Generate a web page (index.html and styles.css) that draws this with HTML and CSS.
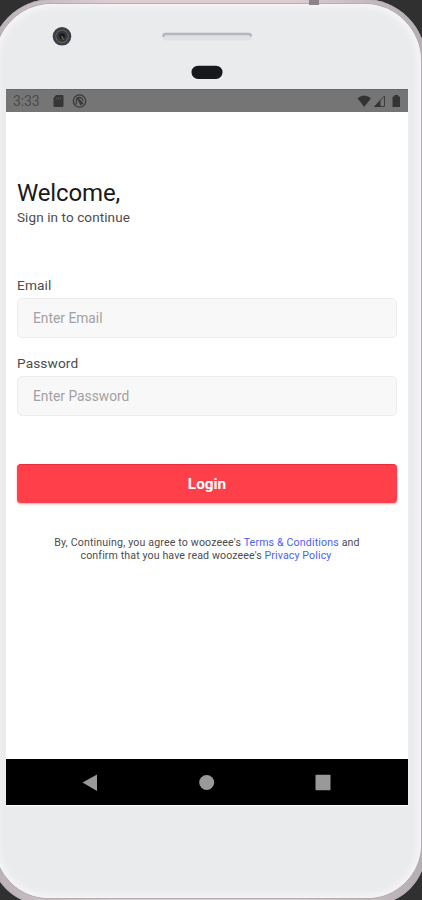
FILE: index.html
```html
<!DOCTYPE html>
<html lang="en">
<head>
<meta charset="utf-8">
<title>Login</title>
<link rel="stylesheet" href="styles.css">
</head>
<body>
<div class="device">
  <div class="shell">
    <header class="hardware">
      <svg width="402" height="85" viewBox="6 4 402 85">
        <circle cx="62" cy="36.3" r="9.3" fill="#3c3e42"/>
        <circle cx="62" cy="36.3" r="6.6" fill="#66686b"/>
        <circle cx="62" cy="36.3" r="5.7" fill="#34363a"/>
        <circle cx="62" cy="36" r="2.8" fill="#15191f"/>
        <path d="M61.6 36l2 3.5" stroke="#77763c" stroke-width="1.3"/>
        <rect x="163" y="32.5" width="88.500" height="8" rx="2.500" fill="#dfe1e7"/>
        <path d="M163.500 37v-1q0-2 2-2h83q2.500 0 2.500 2.500" fill="none" stroke="#b4b7bd" stroke-width="2.500"/>
        <rect x="191.500" y="65.700" width="31" height="13.300" rx="6.500" fill="#16181b"/>
      </svg>
    </header>
    <main class="screen">
      <div class="status">
        <span class="time">3:33</span>
        <svg class="status-left" width="36" height="16" viewBox="0 0 36 16">
          <path d="M5 2h6.500q1 0 1 1v10q0 1-1 1h-8q-1 0-1-1V5z" fill="#363636"/>
          <path d="M5.300 4.500v2M7.500 4v2.500M9.700 4v2.500" stroke="#606060" stroke-width=".7"/>
          <circle cx="28.500" cy="8" r="6.200" fill="none" stroke="#383838" stroke-width="1.300"/>
          <path d="M25.300 11.500v-4q0-3 3-3.200 3.400.1 3.500 3.700" fill="none" stroke="#383838" stroke-width="1.200"/>
          <path d="M26.500 5.500l5.300 5.300M28 8l2.500 4" stroke="#383838" stroke-width="1.800"/>
        </svg>
        <svg class="status-right" width="46" height="16" viewBox="0 0 46 16">
          <path d="M.5 5.200Q7.200-.2 14 5.200L7.200 14z" fill="#333"/>
          <path d="M17.500 13.500L27.500 3v10.500z" fill="none" stroke="#3d3d3d"/>
          <path d="M17 14l6.500-7v7z" fill="#333"/>
          <path d="M36 3.500h1.500V2h3.500v1.500h1.500q.5 0 .5.500v9.500q0 .5-.5.500H36q-.5 0-.5-.5V4q0-.5.500-.5z" fill="#333"/>
        </svg>
      </div>
      <form class="login">
        <h1>Welcome,</h1>
        <p class="subtitle">Sign in to continue</p>
        <label for="email">Email</label>
        <input id="email" type="text" placeholder="Enter Email">
        <label for="password">Password</label>
        <input id="password" type="password" placeholder="Enter Password">
        <button type="button">Login</button>
        <p class="legal">By, Continuing, you agree to woozeee's <a>Terms &amp; Conditions</a> and<br><span class="second">confirm that you have read woozeee's <a>Privacy Policy</a></span></p>
      </form>
      <nav class="navbar">
        <svg width="402" height="46" viewBox="0 0 402 46">
          <path d="M76.500 23.500L91 15.500v16.500z" fill="#999"/>
          <circle cx="200.700" cy="23.500" r="7.500" fill="#999"/>
          <rect x="309.500" y="15.700" width="15" height="15.500" rx=".8" fill="#999"/>
        </svg>
      </nav>
    </main>
  </div>
  <i class="antenna"></i>
</div>
</body>
</html>
```
FILE: styles.css
```css
* { box-sizing: border-box; }
html, body { height: 900px; overflow: hidden; }
body { margin: 0; background: #303030; font-family: Roboto, sans-serif; }
.device {
  position: relative;
  width: 436px;
  height: 906px;
  margin: -1px 0 0 -10px;
  padding: 5px 5px 7px;
  border-radius: 62px 62px 55px 55px;
  background: linear-gradient(90deg, #b9b1b6, #dccdd1 28%, #dccdd1 70%, #b3adb1);
  box-shadow: inset 0 0 0 1px #b7afb4;
}
.shell {
  height: 894px;
  padding-left: 11px;
  border-radius: 57px 57px 54px 54px;
  background: #eaebed;
  box-shadow: inset 0 0 6px 4px #f5f4f6, 0 0 0 1px #b5aeb4;
}
.hardware { height: 85px; }
.hardware svg, .navbar svg { display: block; }
.antenna { position: absolute; left: 319px; top: 0; width: 10px; height: 6px; background: #8b8589; }
.screen {
  display: flex;
  flex-direction: column;
  width: 402px;
  height: 716px;
  background: #fff;
  box-shadow: 0 1px 1px #fff;
}
.status {
  display: flex;
  align-items: center;
  height: 23px;
  padding: 0 5px 0 7px;
  background: #757575;
  border-top: 1px solid #686868;
}
.time { width: 38px; font-size: 14px; color: #4b4b4b; letter-spacing: -.1px; }
.status-right { margin-left: auto; }
.login { display: flex; flex-direction: column; flex: 1; padding: 67px 11px 0; }
h1 { margin: 0; font-size: 24px; line-height: 28px; font-weight: 400; color: #1a1a1a; letter-spacing: -.15px; }
.subtitle { margin: 2px 0 52px; font-size: 13.500px; line-height: 16px; color: #4c4c4c; letter-spacing: .1px; }
label { height: 21px; font-size: 13.700px; line-height: 16px; color: #4c4c4c; letter-spacing: .1px; }
input {
  height: 40px;
  width: 380px;
  margin: 0 0 17px;
  padding: 0 15px;
  border: 1px solid #ececec;
  border-radius: 5px;
  background: #f8f8f8;
  font: 13.800px Roboto, sans-serif;
}
input::placeholder { color: #a2a2a2; opacity: 1; }
button {
  width: 380px;
  height: 39px;
  margin-top: 31px;
  border: 0;
  border-top: 1px solid #e52e3b;
  border-radius: 4px;
  background: #ff404b;
  box-shadow: 0 1px 2px #ff404b88;
  color: #fff;
  font: 700 15.300px Roboto, sans-serif;
}
.legal { margin: 33px 0 0; text-align: center; font-size: 10.600px; line-height: 13px; color: #4c4c4c; white-space: nowrap; letter-spacing: .16px; }
.legal .second { letter-spacing: .12px; padding-right: 2px; }
.legal a { color: #4a61f5; }
.navbar { height: 46px; background: #000; }
```
